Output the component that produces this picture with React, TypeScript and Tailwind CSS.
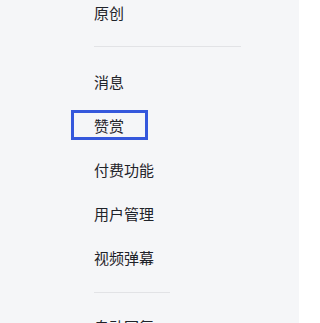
import React from 'react';

const groups: string[][] = [
  ['原创'],
  ['消息', '赞赏', '付费功能', '用户管理', '视频弹幕'],
  ['自动回复'],
];

const SideMenu: React.FC = () => {
  return (
    <div
      className="w-[299px] h-[323px] overflow-hidden bg-[#f5f6f8] pl-[94px]"
      style={{ fontFamily: '"Noto Sans CJK SC", "Noto Sans", sans-serif' }}
    >
      <div className="-mt-[9px] flex flex-col">
        {/* top group */}
        <div className="h-[44px] flex items-center text-[15px] text-[#1f2329]">原创</div>
        <div className="mt-[11px] mb-[13px] h-px w-[147px] bg-[#e2e3e6]" />

        {/* main group */}
        {groups[1].map((label) => (
          <div
            key={label}
            className="relative h-[44px] flex items-center text-[15px] text-[#1f2329]"
          >
            {label === '赞赏' && (
              // highlight box around the selected entry
              <div className="absolute left-[-23px] top-[6px] w-[77px] h-[30px] border-[3px] border-[#3558dc]" />
            )}
            <span className="relative">{label}</span>
          </div>
        ))}
        <div className="mt-[12px] mb-[12px] h-px w-[76px] bg-[#e2e3e6]" />

        {/* bottom group, cut off */}
        <div className="h-[44px] flex items-center text-[15px] text-[#1f2329]">自动回复</div>
      </div>
    </div>
  );
};

export default function App() {
  return <SideMenu />;
}
